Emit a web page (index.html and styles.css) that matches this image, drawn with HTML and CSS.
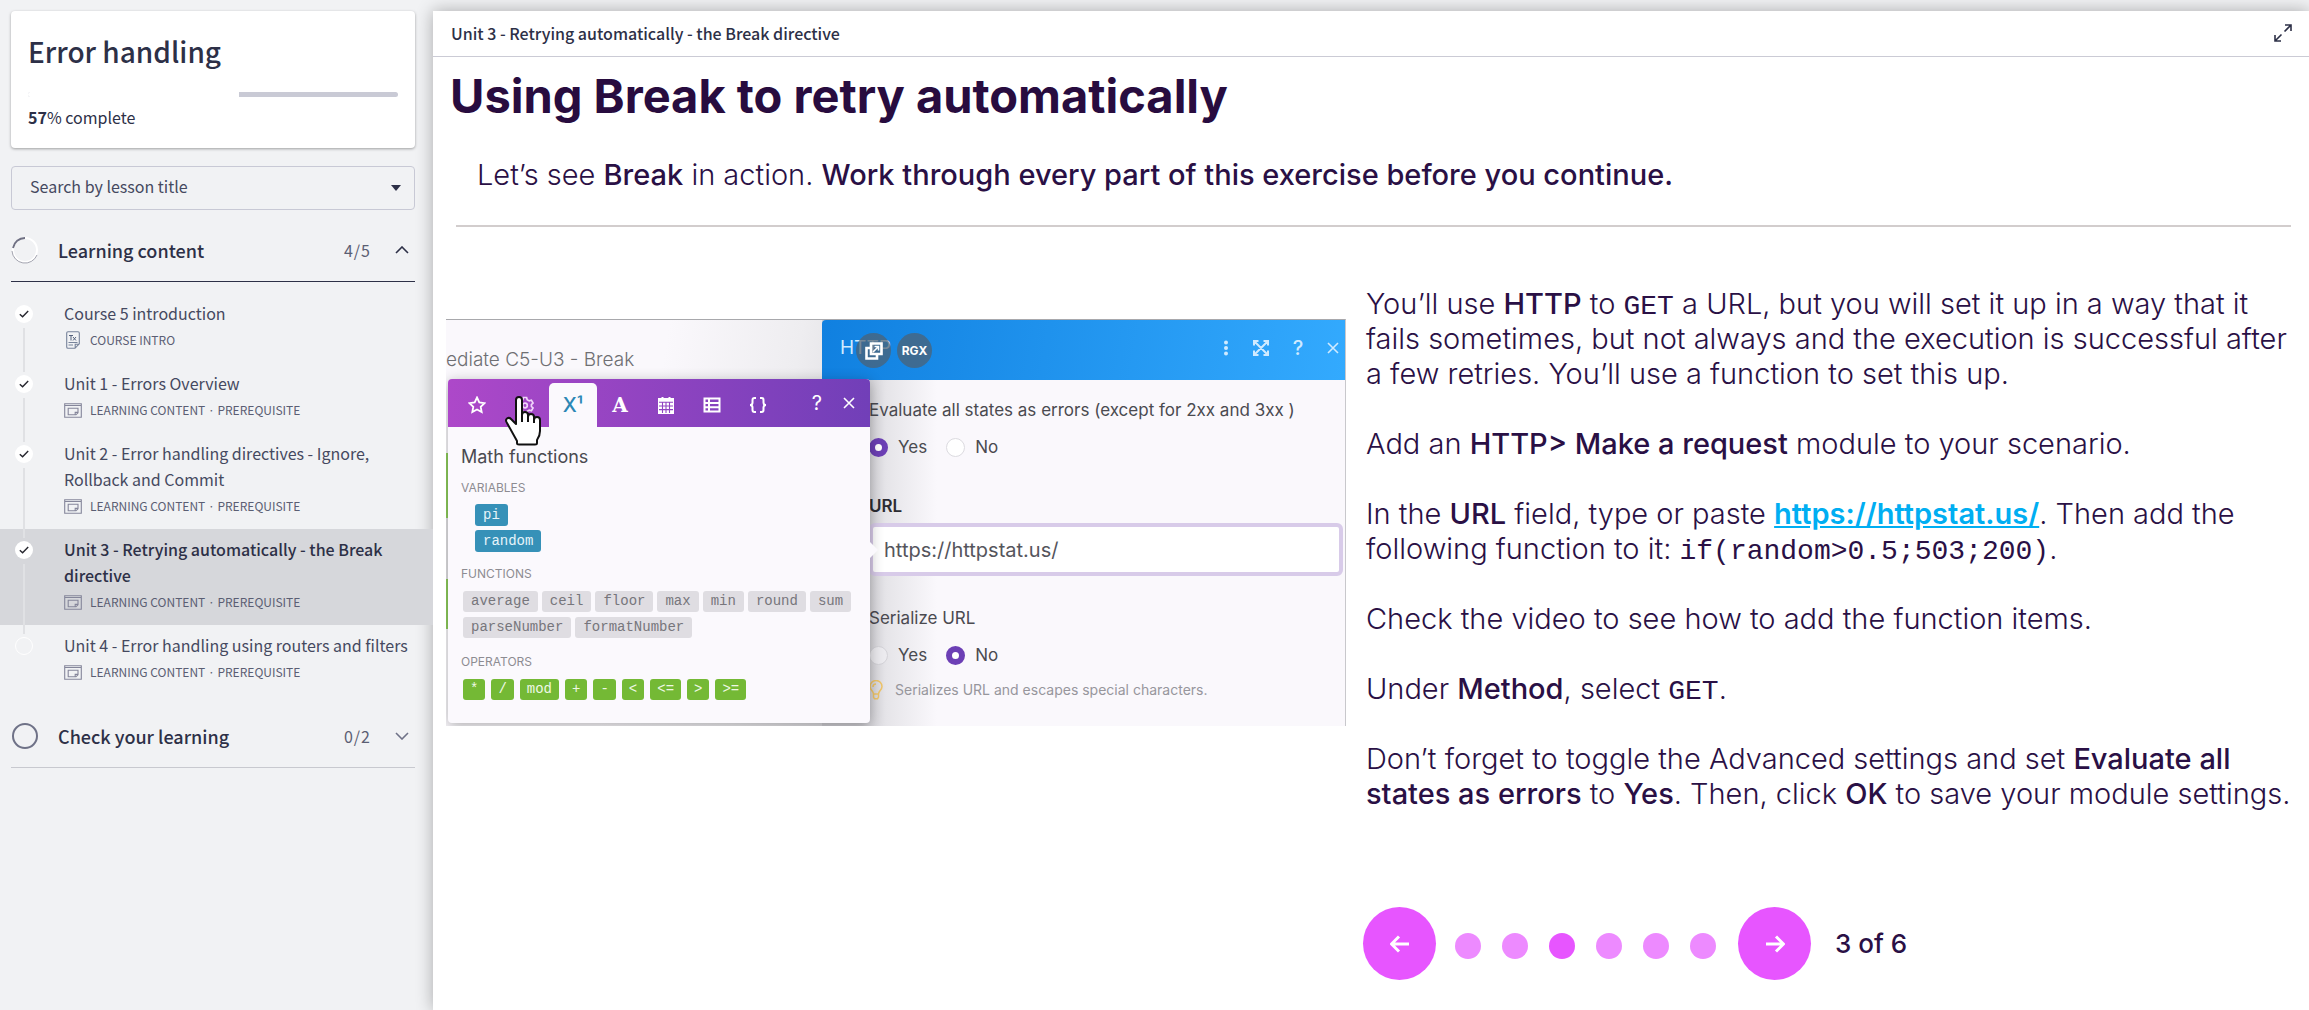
FILE: index.html
```html
<!DOCTYPE html>
<html lang="en">
<head>
<meta charset="utf-8">
<title>Error handling</title>
<link rel="stylesheet" href="styles.css">
</head>
<body>
<svg class="sprite" aria-hidden="true">
  <symbol id="check" viewBox="0 0 10 8"><path d="M.8 4.2 3.6 6.8 9.2 1" fill="none" stroke="#26262e" stroke-width="1.4"/></symbol>
  <symbol id="lesson" viewBox="0 0 18 15"><path d="M.7.7h16.6v13.6H.7zM.7 2.5h16.6M4.2 5.2h9.8v4.6l-2 2H4.2zM11.2 11.6V9.4H14" fill="none" stroke="#85869a" stroke-width="1.1"/></symbol>
  <symbol id="close" viewBox="0 0 12 12"><path d="m1 1 10 10M11 1 1 11" fill="none" stroke="currentColor" stroke-width="1.6"/></symbol>
</svg>

<aside class="sidebar">
  <section class="course-card">
    <h1 class="course-title">Error handling</h1>
    <div class="progress"><div class="progress-done" style="width: 57%"></div></div>
    <p class="progress-label"><b>57</b>% complete</p>
  </section>

  <div class="search">
    <select class="search-select" aria-label="Search by lesson title"><option>Search by lesson title</option></select>
    <svg class="search-caret" viewBox="0 0 10 6"><path d="M0 0h10L5 6z" fill="#2d3047"/></svg>
  </div>

  <nav>
    <button class="section open">
      <svg class="ring" viewBox="0 0 28 28"><circle cx="14" cy="14" r="12" fill="none" stroke="#fff" stroke-width="2"/><path d="M2 12A12 12 0 0 1 14 2" fill="none" stroke="#6f7083" stroke-width="1.8"/><path d="M1 15A13 13 0 0 0 26 19" fill="none" stroke="#8d8e9c" stroke-width=".8"/></svg>
      <span class="section-name">Learning content</span>
      <span class="section-count">4/5</span>
      <svg class="chevron" viewBox="0 0 14 8"><path d="m1 7 6-6 6 6" fill="none" stroke="#2d3047" stroke-width="1.6"/></svg>
    </button>
    <ol class="lessons">
      <li class="lesson">
        <span class="state"><svg class="tick"><use href="#check"/></svg></span>
        <a class="lesson-link" href="#intro"><span class="lesson-title">Course 5 introduction</span>
          <span class="lesson-kind"><svg class="kind-icon page" viewBox="0 0 18 18"><path d="M4 .7h10q1.3 0 1.3 1.3v10.8L11 17.3H4Q2.700 17.300 2.700 16V2Q2.700.7 4 .7zM11.200 17v-3.800h4M4.500 11.500h9M4.500 14h4.500" fill="none" stroke="#77839a" stroke-width="1.100"/><path d="M5 4.500h4M7 4.500v5M9 6l3 3.500M12 6 9 9.500" fill="none" stroke="#55627d"/></svg>COURSE INTRO</span></a>
      </li>
      <li class="lesson">
        <span class="state"><svg class="tick"><use href="#check"/></svg></span>
        <a class="lesson-link" href="#unit-1"><span class="lesson-title">Unit 1 - Errors Overview</span>
          <span class="lesson-kind"><svg class="kind-icon"><use href="#lesson"/></svg>LEARNING CONTENT · PREREQUISITE</span></a>
      </li>
      <li class="lesson">
        <span class="state"><svg class="tick"><use href="#check"/></svg></span>
        <a class="lesson-link" href="#unit-2"><span class="lesson-title">Unit 2 - Error handling directives - Ignore, Rollback and Commit</span>
          <span class="lesson-kind"><svg class="kind-icon"><use href="#lesson"/></svg>LEARNING CONTENT · PREREQUISITE</span></a>
      </li>
      <li class="lesson current">
        <span class="state"><svg class="tick"><use href="#check"/></svg></span>
        <a class="lesson-link" href="#unit-3"><span class="lesson-title">Unit 3 - Retrying automatically - the Break directive</span>
          <span class="lesson-kind"><svg class="kind-icon"><use href="#lesson"/></svg>LEARNING CONTENT · PREREQUISITE</span></a>
      </li>
      <li class="lesson">
        <span class="state todo"></span>
        <a class="lesson-link" href="#unit-4"><span class="lesson-title">Unit 4 - Error handling using routers and filters</span>
          <span class="lesson-kind"><svg class="kind-icon"><use href="#lesson"/></svg>LEARNING CONTENT · PREREQUISITE</span></a>
      </li>
    </ol>
    <button class="section">
      <svg class="ring" viewBox="0 0 28 28"><circle cx="14" cy="14" r="12" fill="none" stroke="#6f7287" stroke-width="2"/></svg>
      <span class="section-name">Check your learning</span>
      <span class="section-count">0/2</span>
      <svg class="chevron" viewBox="0 0 14 8"><path d="m1 1 6 6 6-6" fill="none" stroke="#6f7287" stroke-width="1.600"/></svg>
    </button>
  </nav>
</aside>

<main class="content">
  <header class="unit-bar">
    <span>Unit 3 - Retrying automatically - the Break directive</span>
    <button class="plain" aria-label="Full screen"><svg class="expand" viewBox="0 0 18 18"><path d="M10.500 7.500 17 1M11 1h6v6M7.500 10.500 1 17M1 11v6h6" fill="none" stroke="#2d3047" stroke-width="1.600"/></svg></button>
  </header>

  <div class="slide">
    <h2 class="slide-title">Using Break to retry automatically</h2>
    <p class="lead">Let’s see <b>Break</b> in action. <b>Work through every part of this exercise before you continue.</b></p>
    <hr class="rule">

    <div class="columns">
      <figure class="shot">
        <div class="scenario">ediate C5-U3 - Break</div>
        <div class="panel">
          <div class="panel-head">
            <span class="panel-name">HTTP</span>
            <svg class="head-icon" viewBox="0 0 16 16" fill="#cfeaff"><circle cx="8" cy="2.500" r="2"/><circle cx="8" cy="8" r="2"/><circle cx="8" cy="13.500" r="2"/></svg>
            <svg class="head-icon" viewBox="0 0 16 16"><path d="M1.500 1.500l13 13M14.500 1.500l-13 13M1 5.500V1h4.500M10.500 1H15v4.500M15 10.500V15h-4.500M5.500 15H1v-4.500" fill="none" stroke="#cfeaff" stroke-width="2"/></svg>
            <span class="head-help">?</span>
            <svg class="head-close"><use href="#close"/></svg>
          </div>
          <div class="panel-body">
            <p class="field-label">Evaluate all states as errors (except for 2xx and 3xx )</p>
            <div class="choices">
              <label class="choice"><input class="radio" type="radio" name="evaluate" checked>Yes</label>
              <label class="choice"><input class="radio" type="radio" name="evaluate">No</label>
            </div>
            <label class="field-label strong" for="url">URL</label>
            <input class="url" id="url" type="text" value="https://httpstat.us/">
            <p class="field-label">Serialize URL</p>
            <div class="choices">
              <label class="choice"><input class="radio shaded" type="radio" name="serialize">Yes</label>
              <label class="choice"><input class="radio" type="radio" name="serialize" checked>No</label>
            </div>
            <p class="hint"><svg class="bulb" viewBox="0 0 14 20"><path d="M4.500 14C4.500 11 1 10 1 6.500a6 6 0 0 1 12 0C13 10 9.500 11 9.500 14v3l-1 1.800h-3l-1-1.800zM4.500 14h5M4 7a3 3 0 0 1 3-3" fill="none" stroke="#f0c568" stroke-width="1.500"/></svg>Serializes URL and escapes special characters.</p>
          </div>
        </div>

        <div class="overlay-badges">
          <span class="badge"><svg class="badge-icon" viewBox="0 0 18 18"><path d="M6 1.500h10.500V12H6zM5 6H1.500v10.500H12V13" fill="none" stroke="#fff" stroke-width="2.600"/><path d="m8 10 5-5M9.500 4.500h4v4" fill="none" stroke="#fff" stroke-width="1.600"/></svg></span>
          <span class="badge">RGX</span>
        </div>

        <div class="popup">
          <div class="tabs">
            <span class="tab"><svg class="tab-icon" viewBox="0 0 18 18"><path d="m9 1.500 2.300 4.900 5.300.7-3.900 3.700 1 5.300L9 13.500l-4.700 2.600 1-5.300L1.400 7.100l5.300-.7z" fill="none" stroke="#fff" stroke-width="1.800"/></svg></span>
            <span class="tab"><svg class="tab-icon" viewBox="0 0 18 18"><path d="M7.400 1.500h3.200l.6 2.300 2 1.100 2.200-.7 1.600 2.800-1.600 1.600v1.800l1.600 1.600-1.600 2.800-2.200-.7-2 1.100-.6 2.300H7.400l-.6-2.300-2-1.100-2.200.7L1 12l1.600-1.600V8.600L1 7l1.600-2.800 2.200.7 2-1.100z" fill="none" stroke="#f0d5fa" stroke-width="1.700"/><circle cx="9" cy="9.500" r="2.300" fill="none" stroke="#f0d5fa" stroke-width="1.700"/></svg></span>
            <span class="tab active">X¹</span>
            <span class="tab letter">A</span>
            <span class="tab"><svg class="tab-icon" viewBox="0 0 18 18"><path d="M2 3h14v14H2zM5.500 1v3M12.500 1v3" fill="#fff" stroke="#fff" stroke-width="2"/><path d="M2 6.200h14M2 10h14M2 13.600h14M5.500 6v11M9 6v11M12.500 6v11" stroke="#9145c2" stroke-width="1.100"/></svg></span>
            <span class="tab"><svg class="tab-icon" viewBox="0 0 18 18"><path d="M1.500 2.500h15v13h-15zM1.500 7h15M1.500 11.200h15M6 2.500v13" fill="none" stroke="#fff" stroke-width="2"/></svg></span>
            <span class="tab"><svg class="tab-icon wide" viewBox="0 0 20 18"><path d="M8 2H6.500Q4.500 2 4.500 4v2.500Q4.500 9 2 9q2.500 0 2.500 2.500V14q0 2 2 2H8M12 2h1.500q2 0 2 2v2.500Q15.500 9 18 9q-2.500 0-2.500 2.500V14q0 2-2 2H12" fill="none" stroke="#fff" stroke-width="2"/></svg></span>
            <span class="tab-tools"><span>?</span><svg class="head-close"><use href="#close"/></svg></span>
          </div>
          <div class="popup-body">
            <p class="popup-title">Math functions</p>
            <p class="group">VARIABLES</p>
            <div class="tags vars"><span class="tag">pi</span><span class="tag">random</span></div>
            <p class="group">FUNCTIONS</p>
            <div class="tags"><span class="tag">average</span><span class="tag">ceil</span><span class="tag">floor</span><span class="tag">max</span><span class="tag">min</span><span class="tag">round</span><span class="tag">sum</span><span class="tag">parseNumber</span><span class="tag">formatNumber</span></div>
            <p class="group">OPERATORS</p>
            <div class="tags ops"><span class="tag">*</span><span class="tag">/</span><span class="tag">mod</span><span class="tag">+</span><span class="tag">-</span><span class="tag">&lt;</span><span class="tag">&lt;=</span><span class="tag">&gt;</span><span class="tag">&gt;=</span></div>
          </div>
          <svg class="hand" viewBox="0 0 38 50"><path d="M12 4q0-3 3-3t3 3v15q0-3 3-3t3 3v2q0-3 3-3t3 3v3q0-3 3-3t3 3v11q0 5-3 9v3q0 1.500-2 1.500H15q-2 0-2-1.500v-2L3 27q-2-3 0-4.500t4 .5l5 5z" fill="#fff" stroke="#111" stroke-width="2" stroke-linejoin="round"/><path d="M18 19v7M24 20v6M30 22v5" stroke="#111" stroke-width="2"/></svg>
        </div>
      </figure>

      <div class="lesson-text">
        <p>You’ll use <b>HTTP</b> to <code>GET</code> a URL, but you will set it up in a way that it fails sometimes, but not always and the execution is successful after a few retries. You’ll use a function to set this up.</p>
        <p>Add an <b>HTTP&gt; Make a request</b> module to your scenario.</p>
        <p>In the <b>URL</b> field, type or paste <a class="ext" href="https://httpstat.us/">https://httpstat.us/</a>. Then add the following function to it: <code>if(random&gt;0.5;503;200)</code>.</p>
        <p>Check the video to see how to add the function items.</p>
        <p>Under <b>Method</b>, select <code>GET</code>.</p>
        <p>Don’t forget to toggle the Advanced settings and set <b>Evaluate all states as errors</b> to <b>Yes</b>. Then, click <b>OK</b> to save your module settings.</p>

        <div class="pager">
          <button class="arrow" aria-label="Previous"><svg class="arrow-icon" viewBox="0 0 20 18"><path d="M19 9H2M9 1.500 1.500 9 9 16.500" fill="none" stroke="#fff" stroke-width="3"/></svg></button>
          <div class="dots">
            <button class="dot" aria-label="Step 1"></button><button class="dot" aria-label="Step 2"></button><button class="dot on" aria-label="Step 3"></button><button class="dot" aria-label="Step 4"></button><button class="dot" aria-label="Step 5"></button><button class="dot" aria-label="Step 6"></button>
          </div>
          <button class="arrow" aria-label="Next"><svg class="arrow-icon" viewBox="0 0 20 18"><path d="M1 9h17M11 1.500 18.500 9 11 16.500" fill="none" stroke="#fff" stroke-width="3"/></svg></button>
          <span class="pager-label">3 of 6</span>
        </div>
      </div>
    </div>
  </div>
</main>
</body>
</html>
```

FILE: styles.css
```css
* { box-sizing: border-box; }
body {
  margin: 0;
  min-height: 100vh;
  display: grid;
  grid-template-columns: 433px minmax(0, 1fr);
  background: #f1f2f4;
  color: #2d3047;
  font: 16px/26px "Noto Sans CJK JP", "Noto Sans", sans-serif;
}
p, h1, h2, ol, figure { margin: 0; padding: 0; }
button { margin: 0; padding: 0; border: 0; background: none; font: inherit; color: inherit; }
svg { display: block; flex: none; }
.sprite { position: absolute; width: 0; height: 0; }

/* Sidebar */
.sidebar { padding-top: 11px; }
.course-card {
  margin: 0 18px 18px 11px;
  padding: 18px 17px 12px;
  height: 137px;
  background: #fff;
  border-radius: 4px;
  box-shadow: 0 1px 3px rgba(0, 0, 0, .35);
}
.course-title { font-size: 28px; line-height: 44px; font-weight: 500; }
.progress { height: 5px; margin-top: 19px; border-radius: 3px; background: #c9cad5; overflow: hidden; }
.progress-done { height: 5px; background: #fff; }
.progress-label { margin-top: 7px; }
.progress-label b { font-weight: 700; }

.search { position: relative; margin: 0 18px 0 11px; }
.search-select {
  width: 100%;
  height: 44px;
  padding: 0 40px 4px 18px;
  appearance: none;
  background: none;
  border: 1px solid #c8c9d5;
  border-radius: 4px;
  font: inherit;
  color: #454960;
}
.search-caret { position: absolute; right: 14px; top: 19px; width: 10px; height: 6px; }

.section {
  display: flex;
  align-items: center;
  width: calc(100% - 29px);
  height: 60px;
  margin-left: 11px;
  padding-bottom: 4px;
  border-bottom: 1px solid #c8c9cf;
  text-align: left;
}
.section.open { height: 72px; padding: 8px 0 0; border-bottom-color: #2d3047; }
.ring { width: 28px; height: 28px; }
.section-name { flex: 1; padding-left: 19px; font-size: 18px; font-weight: 500; }
.section-count { font-size: 16px; letter-spacing: 1px; color: #5b5e73; }
.chevron { width: 14px; height: 8px; margin: 0 6px 0 24px; }

.lessons { list-style: none; padding: 11px 0 13px; }
.lesson { position: relative; display: flex; }
.lesson.current { background: #d6d7db; }
.state {
  display: grid;
  place-items: center;
  flex: none;
  width: 18px;
  height: 18px;
  margin: 12px 0 0 15px;
  border-radius: 9px;
  background: #fff;
}
.state.todo { background: none; border: 1px solid #fff; }
.tick { width: 10px; height: 8px; }
.lesson:not(:last-child)::after {
  content: "";
  position: absolute;
  left: 23px;
  top: 35px;
  bottom: -9px;
  width: 2px;
  background: #e0e1e4;
  z-index: 1;
}
.lesson-link { flex: 1; padding: 7px 20px 9px 31px; color: #454960; text-decoration: none; }
.lesson-title { display: block; }
.current .lesson-title { font-weight: 500; color: #2d3047; }
.lesson-kind { display: flex; align-items: center; height: 28px; font-size: 12px; color: #5b5e73; }
.kind-icon { width: 18px; height: 15px; margin-right: 8px; }
.kind-icon.page { height: 18px; }

/* Unit pane */
.content { margin-top: 11px; background: #fff; box-shadow: 0 0 16px rgba(0, 0, 0, .3); }
.unit-bar {
  display: flex;
  align-items: center;
  justify-content: space-between;
  height: 46px;
  padding: 0 17px 2px 18px;
  border-bottom: 1px solid #cbcbd5;
  font-weight: 500;
}
.expand { width: 18px; height: 18px; }

.slide { padding: 11px 8px 30px 13px; font-family: Inter, sans-serif; color: #2a1045; }
.slide-title { padding-left: 4px; font-size: 47px; line-height: 56px; font-weight: 700; color: #280c3f; }
.lead { margin-top: 33px; padding-left: 31px; font-size: 29px; line-height: 35px; font-weight: 300; }
.lead b, .lesson-text b { font-weight: 500; }
.rule { height: 2px; margin: 33px 10px 59px 10px; border: 0; background: #d2cdcd; }
.columns { display: grid; grid-template-columns: minmax(0, 900fr) minmax(0, 935fr); gap: 20px; align-items: start; }

.lesson-text { font-size: 29px; line-height: 35px; font-weight: 300; }
.lesson-text p { margin-bottom: 35px; }
.lesson-text code { font: 28px/28px "Liberation Mono", monospace; }
.ext { color: #00aef2; font-weight: 600; }

.pager { display: flex; align-items: center; margin: 96px 0 0 -3px; }
.arrow { width: 73px; height: 73px; border-radius: 50%; background: #e755ff; display: grid; place-items: center; }
.arrow-icon { width: 20px; height: 18px; }
.dots { display: flex; gap: 21px; margin: 4px 22px 0 19px; }
.dot { width: 26px; height: 26px; border-radius: 50%; background: #ed8aff; }
.dot.on { background: #e755ff; }
.pager-label { margin-left: 24px; font-size: 26px; font-weight: 500; }

/* Screenshot of the scenario editor */
.shot {
  position: relative;
  display: flex;
  margin-top: 33px;
  height: 407px;
  overflow: hidden;
  border-top: 1px solid #a8a8ac;
  border-right: 1px solid #c8c8cc;
  background: #faf8fc;
  color: #4a4a50;
  font-size: 17px;
  line-height: 24px;
}
.shot::before {
  content: "";
  position: absolute;
  left: 0;
  top: 133px;
  width: 2px;
  height: 176px;
  background: linear-gradient(#8fcf5c 0 65px, #e4e3e6 65px 126px, #8fcf5c 126px);
}
.scenario {
  flex: none;
  width: 376px;
  padding-top: 28px;
  font-size: 19px;
  font-weight: 300;
  color: #6f6f73;
  background: linear-gradient(100deg, #faf8fc 50%, #eeedf0 80%, #dddce0);
}
.panel { flex: 1; min-width: 0; background: linear-gradient(90deg, #cfced3 40px, #e6e5e9 65px, #faf8fc 115px); }
.panel-head {
  display: flex;
  align-items: center;
  height: 60px;
  padding: 0 6px 4px 18px;
  background: linear-gradient(100deg, #1080e0, #33aafe);
  border-top-left-radius: 4px;
  color: #cfeaff;
  font-size: 19px;
}
.panel-name { flex: 1; }
.head-icon { width: 16px; height: 16px; margin-right: 19px; }
.head-icon + .head-icon { margin-right: 22px; }
.head-help { width: 14px; margin-right: 22px; font-size: 20px; font-weight: 500; text-align: center; }
.head-close { width: 12px; height: 12px; }
.panel-body { padding: 18px 2px 0 47px; }
.field-label { display: block; height: 24px; }
.field-label.strong { font-weight: 600; color: #2c2c32; margin-top: 35px; }
.choices { display: flex; gap: 19px; margin-top: 13px; }
.choice { display: flex; align-items: center; gap: 10px; height: 24px; }
.radio { appearance: none; width: 19px; height: 19px; margin: 0; border: 1px solid #dcdbe0; border-radius: 50%; background: #fff; }
.radio.shaded { background: #ecebef; border-color: #d4d3d8; }
.radio:checked { border: 6px solid #6c3fb5; }
.url {
  display: block;
  width: 100%;
  height: 53px;
  margin: 5px 0 30px;
  padding: 0 11px;
  border: 4px solid #d8cbe9;
  border-radius: 6px;
  background: #fff;
  color: #55555c;
  font: 20px/24px Inter, sans-serif;
}
.hint { display: flex; align-items: center; gap: 12px; margin-top: 11px; height: 24px; font-size: 14px; color: #97969c; }
.bulb { width: 14px; height: 20px; }

.overlay-badges { position: absolute; left: 410px; top: 13px; display: flex; gap: 6px; }
.badge {
  width: 35px;
  height: 35px;
  border-radius: 50%;
  background: rgba(80, 95, 110, .7);
  display: grid;
  place-items: center;
  color: #fff;
  font-size: 12px;
  font-weight: 700;
}
.badge-icon { width: 18px; height: 18px; }

.popup {
  position: absolute;
  left: 2px;
  top: 59px;
  width: 422px;
  height: 344px;
  background: #fbf9fd;
  border-radius: 4px;
  box-shadow: 0 3px 14px rgba(0, 0, 0, .3);
}
.popup::after {
  content: "";
  position: absolute;
  left: 422px;
  top: 163px;
  border: 8px solid transparent;
  border-left-color: #fbf9fd;
  border-right-width: 0;
}
.tabs {
  display: flex;
  align-items: flex-end;
  height: 48px;
  padding-left: 5px;
  border-radius: 4px 4px 0 0;
  background: linear-gradient(90deg, #ad48c9, #713fb8);
  color: #fff;
}
.tab { width: 48px; height: 44px; display: grid; place-items: center; }
.tab.active ~ .tab { width: 46px; }
.tab-icon { width: 18px; height: 18px; }
.tab-icon.wide { width: 20px; }
.tab.active { background: #fbf9fd; border-radius: 5px 5px 0 0; color: #2b87b5; font-size: 20px; font-weight: 500; }
.tab.letter { font: 700 20px/24px "DejaVu Serif", serif; }
.tab-tools { flex: 1; display: flex; justify-content: flex-end; align-items: center; gap: 21px; height: 48px; padding-right: 15px; font-size: 20px; }
.popup-body { padding: 18px 10px 0 13px; }
.popup-title { font-size: 18px; line-height: 24px; }
.group { margin-top: 14px; font-size: 12px; line-height: 16px; color: #8d8c92; }
.popup-title + .group { margin-top: 11px; }
.tags { display: flex; flex-wrap: wrap; gap: 5px 4px; padding: 9px 0 2px 2px; }
.tags.vars { flex-direction: column; align-items: flex-start; gap: 4px; padding: 8px 0 0 14px; }
.tags.ops { gap: 6px; }
.tag { padding: 0 8px; border-radius: 3px; background: #dfdde2; color: #77767c; font: 14px/21px "Liberation Mono", monospace; }
.vars .tag { background: #3691b8; color: #e6f4fa; line-height: 22px; }
.ops .tag { padding: 0 7px; background: #74b935; color: #eef8e4; }
.hand { position: absolute; left: 56px; top: 17px; width: 38px; height: 50px; }
```
